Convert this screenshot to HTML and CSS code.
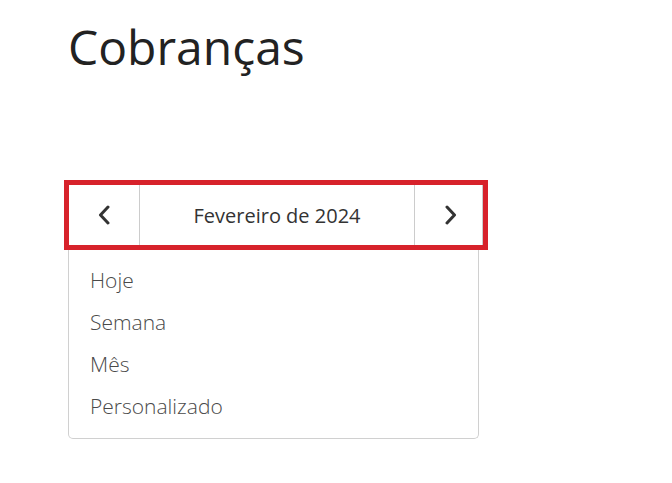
FILE: index.html
```html
<!DOCTYPE html>
<html lang="pt-BR">
<head>
<meta charset="utf-8">
<title>Cobranças</title>
<link rel="stylesheet" href="styles.css">
</head>
<body>
<div class="page">
  <h1 class="title">Cobranças</h1>
  <div class="picker">
    <div class="nav">
      <button class="arrow arrow-prev" aria-label="Anterior">
        <svg width="12" height="20" viewBox="0 0 12 20"><path d="M10 2 L2.5 10 L10 18" fill="none" stroke="#333" stroke-width="3" stroke-linecap="round" stroke-linejoin="round"/></svg>
      </button>
      <div class="label">Fevereiro de 2024</div>
      <button class="arrow arrow-next" aria-label="Próximo">
        <svg width="12" height="20" viewBox="0 0 12 20"><path d="M2 2 L9.5 10 L2 18" fill="none" stroke="#333" stroke-width="3" stroke-linecap="round" stroke-linejoin="round"/></svg>
      </button>
    </div>
    <ul class="menu">
      <li class="menu-item">Hoje</li>
      <li class="menu-item">Semana</li>
      <li class="menu-item">Mês</li>
      <li class="menu-item">Personalizado</li>
    </ul>
    <div class="highlight"></div>
  </div>
</div>
</body>
</html>
```
FILE: styles.css
```css
* { box-sizing: border-box; }
html, body { margin: 0; padding: 0; background: #fff; }
body { font-family: "Open Sans", "Noto Sans", sans-serif; color: #222; }
.page { padding: 14px 0 0 68px; }
.title {
  margin: 0;
  font-size: 48px;
  font-weight: 400;
  line-height: normal;
  color: #222;
}
.picker {
  position: relative;
  margin-top: 105px;
  width: 415px;
}
.nav {
  display: flex;
  height: 62px;
  border: 1px solid #ccc;
  background: #fff;
}
.arrow {
  width: 70px;
  flex: none;
  border: none;
  background: none;
  padding: 0;
  display: flex;
  align-items: center;
  justify-content: center;
}
.arrow-next { width: 67px; padding-left: 4px; }
.label {
  flex: 1;
  display: flex;
  align-items: center;
  justify-content: center;
  border-left: 1px solid #ccc;
  border-right: 1px solid #ccc;
  font-size: 20px;
  color: #333;
}
.menu {
  list-style: none;
  margin: 0;
  width: 411px;
  padding: 13px 0 11px 21px;
  border: 1px solid #d0d0d0;
  border-top: none;
  border-radius: 0 0 5px 5px;
}
.menu-item {
  font-size: 21px;
  font-weight: 300;
  line-height: 42px;
  color: #4a4a4a;
}
.highlight {
  position: absolute;
  left: -4px;
  top: -4px;
  width: 424px;
  height: 70px;
  border: 5px solid #d7222b;
  pointer-events: none;
}
```
